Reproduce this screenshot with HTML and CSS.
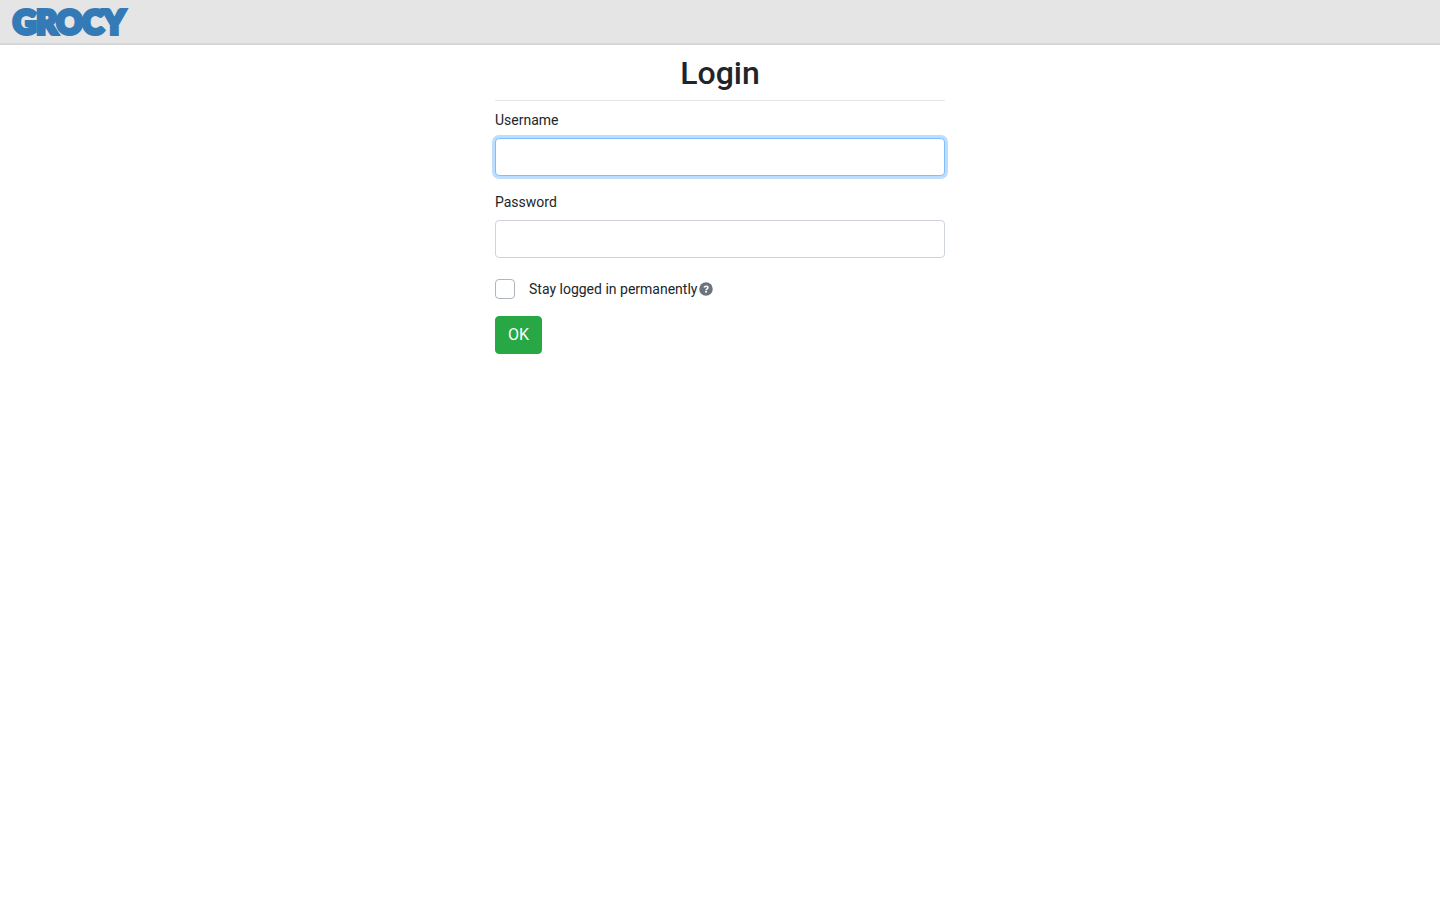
FILE: index.html
```
<!DOCTYPE html>
<html lang="en">
<head>
    <meta charset="UTF-8">
    <meta name="viewport" content="width=device-width, initial-scale=1.0">
    <title>Login | grocy</title>
    <link rel="stylesheet" href="styles.css">
</head>
<body>
    <nav class="navbar">
        <a class="navbar-brand" href="#">GROCY</a>
    </nav>

    <main class="login">
        <h1 class="title">Login</h1>
        <hr>
        <form>
            <div class="form-group">
                <label for="username">Username</label>
                <input type="text" class="form-control" id="username" name="username" autofocus>
            </div>
            <div class="form-group">
                <label for="password">Password</label>
                <input type="password" class="form-control" id="password" name="password">
            </div>
            <div class="form-check">
                <input type="checkbox" id="stay-logged-in" name="stay_logged_in">
                <label for="stay-logged-in">Stay logged in permanently</label>
                <svg class="help-icon" viewBox="0 0 512 512" role="img" aria-label="Help">
                    <circle cx="256" cy="256" r="248" fill="#6c757d"/>
                    <path d="M184 202c14-32 38-48 75-48 41 0 68 23 68 54 0 45-67 43-67 90" fill="none" stroke="#fff" stroke-width="56"/>
                    <circle cx="258" cy="358" r="38" fill="#fff"/>
                </svg>
            </div>
            <button type="submit" class="btn-success">OK</button>
        </form>
    </main>
</body>
</html>
```
FILE: styles.css
```
* {
    box-sizing: border-box;
}
body {
    margin: 0;
    font-family: Roboto, "Liberation Sans", sans-serif;
    font-size: 16px;
    line-height: 24px;
    color: #212529;
    background-color: #fff;
}
.navbar {
    display: flex;
    align-items: center;
    height: 45px;
    padding: 0 13px;
    background-color: #e5e5e5;
    border-bottom: 2px solid #d6d6d6;
}
.navbar-brand {
    font-family: Lato, sans-serif;
    font-size: 32px;
    font-weight: 900;
    line-height: 40px;
    color: #337ab7;
    -webkit-text-stroke: 4px #337ab7;
    text-decoration: none;
}
.login {
    max-width: 480px;
    margin: 0 auto;
    padding: 9px 15px;
}
.title {
    margin: 0;
    font-size: 32px;
    font-weight: 500;
    line-height: 38px;
    text-align: center;
}
hr {
    margin: 8px 0;
    border: 0;
    border-top: 1px solid #e5e5e5;
}
.form-group {
    margin-bottom: 15px;
}
label {
    font-size: 14px;
    line-height: 22px;
}
.form-group label {
    display: block;
    margin-bottom: 7px;
}
.form-control {
    display: block;
    width: 100%;
    height: 38px;
    padding: 6px 12px;
    font: inherit;
    color: #495057;
    background-color: #fff;
    border: 1px solid #ced4da;
    border-radius: 4px;
}
.form-control:focus {
    border-color: #80bdff;
    outline: 0;
    box-shadow: 0 0 0 3px #bfdeff;
}
.form-check {
    display: flex;
    align-items: center;
    margin: 20px 0 16px;
}
.form-check input {
    appearance: none;
    width: 20px;
    height: 20px;
    margin: 0 14px 0 0;
    background-color: #fff;
    border: 1px solid #adb5bd;
    border-radius: 4px;
}
.form-check input:checked {
    background-color: #007bff;
}
.help-icon {
    width: 14px;
    height: 14px;
    margin-left: 2px;
}
.btn-success {
    padding: 6px 12px;
    font: inherit;
    color: #fff;
    background-color: #28a745;
    border: 1px solid #28a745;
    border-radius: 4px;
    cursor: pointer;
}
```
